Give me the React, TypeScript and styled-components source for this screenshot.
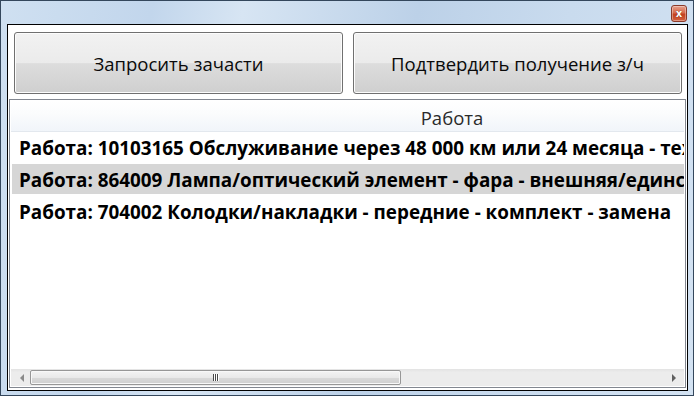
import React from "react";
import styled, { createGlobalStyle } from "styled-components";

const GlobalStyle = createGlobalStyle`
  html, body {
    margin: 0;
    padding: 0;
    width: 694px;
    height: 396px;
    overflow: hidden;
    background: #ffffff;
  }
  * {
    box-sizing: border-box;
  }
`;

const Window = styled.div`
  width: 694px;
  height: 396px;
  display: flex;
  flex-direction: column;
  padding: 0 5px 4px 6px;
  border: 1px solid #34475c;
  background: linear-gradient(100deg, #cfe0f1 0%, #c2d6ec 20%, #d7e5f3 32%, #bcd1e8 55%, #c9dbee 75%, #d3e2f2 100%);
  font-family: "Open Sans", "Noto Sans", "DejaVu Sans", sans-serif;
`;

const TitleBar = styled.div`
  height: 23px;
  flex: none;
  display: flex;
  justify-content: flex-end;
  align-items: flex-start;
  padding: 4px 1px 0 0;
`;

const CloseButton = styled.div`
  width: 16px;
  height: 17px;
  border: 1px solid #8a3a2a;
  border-radius: 3px;
  background: linear-gradient(#e7a08c 0%, #d66a4c 45%, #c4411f 55%, #d2603f 100%);
  box-shadow: inset 0 0 0 1px rgba(255, 255, 255, 0.35);
  display: flex;
  align-items: center;
  justify-content: center;
  color: #ffffff;
  font-family: "DejaVu Sans", sans-serif;
  font-weight: 700;
  font-size: 10px;
  line-height: 1;
  text-shadow: 0 0 1px #5a1a0a;
`;

const Client = styled.div`
  flex: 1;
  display: flex;
  flex-direction: column;
  border: 1px solid #000000;
  background: #ffffff;
  padding: 0 1px 2px 1px;
  min-height: 0;
`;

const ButtonRow = styled.div`
  display: flex;
  gap: 10px;
  padding: 7px 4px 5px 5px;
  flex: none;
`;

const ActionButton = styled.div`
  flex: 1;
  height: 62px;
  border: 1px solid #707070;
  border-radius: 3px;
  background: linear-gradient(#f2f2f2 0%, #ebebeb 50%, #dddddd 51%, #cfcfcf 100%);
  box-shadow: inset 0 0 0 1px #fcfcfc;
  display: flex;
  align-items: center;
  justify-content: center;
  font-size: 18.5px;
  color: #0a0a0a;
  padding-top: 1px;
`;

const List = styled.div`
  flex: 1;
  display: flex;
  flex-direction: column;
  border: 1px solid #828790;
  padding: 1px;
  min-height: 0;
`;

const ListBody = styled.div`
  flex: 1;
  overflow: hidden;
  min-height: 0;
`;

const Header = styled.div`
  width: 882px;
  height: 31px;
  display: flex;
  align-items: center;
  justify-content: center;
  background: linear-gradient(#ffffff 0%, #fbfcfd 40%, #f1f5fa 100%);
  border-bottom: 1px solid #e3e8ee;
  font-size: 18.5px;
  color: #2a2a2a;
  padding-top: 2px;
`;

const Row = styled.div`
  width: 672px;
  height: 32px;
  margin-left: 1px;
  display: flex;
  align-items: flex-start;
  overflow: hidden;
  white-space: nowrap;
`;

const RowInner = styled.div<{ $selected?: boolean }>`
  width: 100%;
  height: 30px;
  display: flex;
  align-items: center;
  padding: 1px 0 0 7px;
  background: ${(p) => (p.$selected ? "#d6d6d6" : "transparent")};
  font-weight: 700;
  font-size: 18.85px;
  color: #000000;
`;

const HScroll = styled.div`
  height: 17px;
  flex: none;
  display: flex;
  align-items: center;
  background: linear-gradient(#e3e3e3 0%, #ececec 20%, #ececec 100%);
  padding: 0 2px;
`;

const Arrow = styled.div<{ $dir: "left" | "right" }>`
  width: 17px;
  height: 17px;
  display: flex;
  align-items: center;
  justify-content: center;
  &::before {
    content: "";
    width: 0;
    height: 0;
    border-top: 4px solid transparent;
    border-bottom: 4px solid transparent;
    ${(p) =>
      p.$dir === "left"
        ? "border-right: 4px solid #8a8a8a;"
        : "border-left: 4px solid #606060;"}
  }
`;

const Track = styled.div`
  flex: 1;
  height: 17px;
  display: flex;
  align-items: center;
`;

const Thumb = styled.div`
  height: 15px;
  border: 1px solid #979797;
  border-radius: 2px;
  background: linear-gradient(#f4f4f4 0%, #e9e9e9 50%, #d9d9d9 51%, #d0d0d0 100%);
  box-shadow: inset 0 0 0 1px #f8f8f8;
  display: flex;
  align-items: center;
  justify-content: center;
  gap: 1px;
`;

const Grip = styled.span`
  width: 1px;
  height: 7px;
  background: #4a4a4a;
  box-shadow: 1px 0 0 #ffffff;
`;

const rows = [
  "Работа: 10103165 Обслуживание через 48 000 км или 24 месяца - техническое обслуживание",
  "Работа: 864009 Лампа/оптический элемент - фара - внешняя/единственная - замена",
  "Работа: 704002 Колодки/накладки - передние - комплект - замена",
];

export default function App() {
  const thumbRatio = 0.585;
  return (
    <>
      <GlobalStyle />
      <Window>
        <TitleBar>
          <CloseButton>x</CloseButton>
        </TitleBar>
        <Client>
          <ButtonRow>
            <ActionButton>Запросить зачасти</ActionButton>
            <ActionButton>Подтвердить получение з/ч</ActionButton>
          </ButtonRow>
          <List>
            <ListBody>
              <Header>Работа</Header>
              {rows.map((text, i) => (
                <Row key={i}>
                  <RowInner $selected={i === 1}>{text}</RowInner>
                </Row>
              ))}
            </ListBody>
            <HScroll>
              <Arrow $dir="left" />
              <Track>
                <Thumb style={{ width: `${thumbRatio * 100}%` }}>
                  <Grip />
                  <Grip />
                  <Grip />
                </Thumb>
              </Track>
              <Arrow $dir="right" />
            </HScroll>
          </List>
        </Client>
      </Window>
    </>
  );
}
